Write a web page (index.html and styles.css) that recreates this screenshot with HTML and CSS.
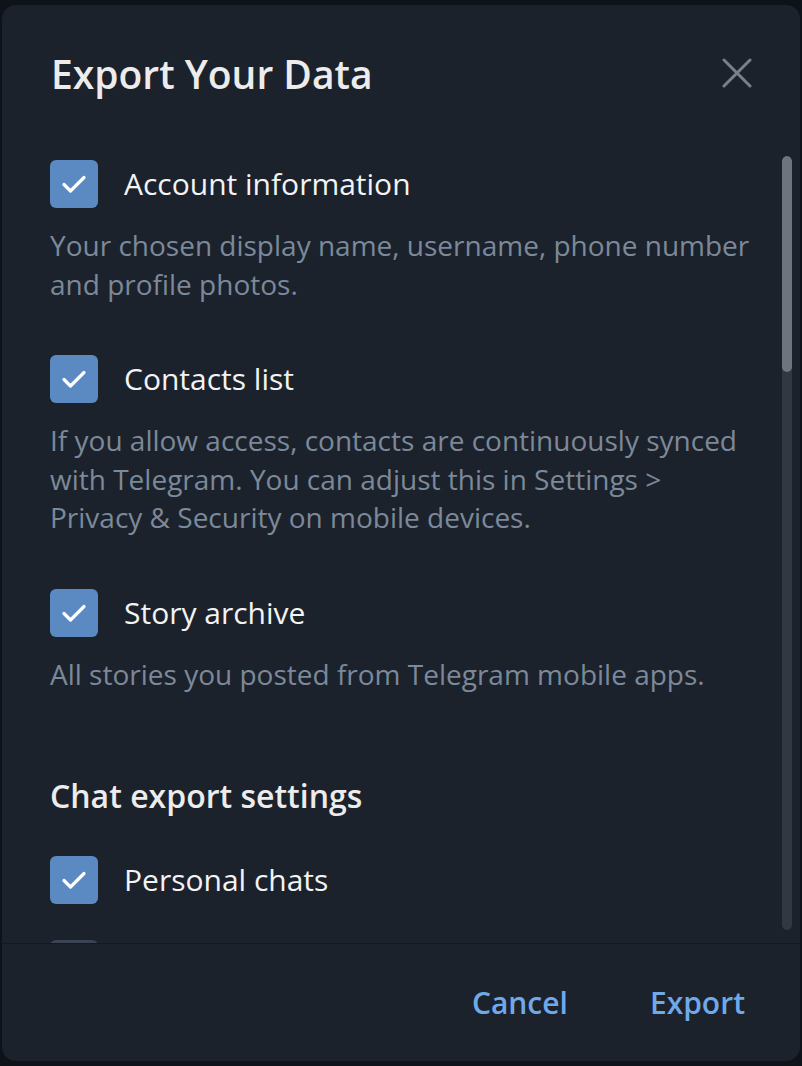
FILE: index.html
```html
<!DOCTYPE html>
<html lang="en">
<head>
<meta charset="utf-8">
<title>Export Your Data</title>
<link rel="stylesheet" href="styles.css">
</head>
<body>
<div class="modal">
  <div class="header">
    <h1 class="title">Export Your Data</h1>
    <button class="close" aria-label="Close">
      <svg width="30" height="30" viewBox="0 0 30 30"><path d="M2 2 L28 28 M28 2 L2 28" stroke="#7a8089" stroke-width="3" stroke-linecap="round" fill="none"/></svg>
    </button>
  </div>
  <div class="body">
    <div class="scroll">
      <div class="item">
        <div class="row"><span class="cb"><svg width="26" height="20" viewBox="0 0 26 20"><path d="M3 10.5 L9.5 17 L23 3.5" stroke="#fff" stroke-width="3.2" fill="none" stroke-linecap="round" stroke-linejoin="round"/></svg></span><span class="label">Account information</span></div>
        <p class="desc">Your chosen display name, username, phone number and profile photos.</p>
      </div>
      <div class="item">
        <div class="row"><span class="cb"><svg width="26" height="20" viewBox="0 0 26 20"><path d="M3 10.5 L9.5 17 L23 3.5" stroke="#fff" stroke-width="3.2" fill="none" stroke-linecap="round" stroke-linejoin="round"/></svg></span><span class="label">Contacts list</span></div>
        <p class="desc">If you allow access, contacts are continuously synced with Telegram. You can adjust this in Settings &gt; Privacy &amp; Security on mobile devices.</p>
      </div>
      <div class="item">
        <div class="row"><span class="cb"><svg width="26" height="20" viewBox="0 0 26 20"><path d="M3 10.5 L9.5 17 L23 3.5" stroke="#fff" stroke-width="3.2" fill="none" stroke-linecap="round" stroke-linejoin="round"/></svg></span><span class="label">Story archive</span></div>
        <p class="desc">All stories you posted from Telegram mobile apps.</p>
      </div>
      <h2 class="section">Chat export settings</h2>
      <div class="item compact">
        <div class="row"><span class="cb"><svg width="26" height="20" viewBox="0 0 26 20"><path d="M3 10.5 L9.5 17 L23 3.5" stroke="#fff" stroke-width="3.2" fill="none" stroke-linecap="round" stroke-linejoin="round"/></svg></span><span class="label">Personal chats</span></div>
      </div>
      <div class="item compact">
        <div class="row"><span class="cb off"></span></div>
      </div>
    </div>
    <div class="scrollbar"><div class="thumb"></div></div>
  </div>
  <div class="footer">
    <button class="btn">Cancel</button>
    <button class="btn">Export</button>
  </div>
</div>
</body>
</html>
```
FILE: styles.css
```css
* { box-sizing: border-box; }
html, body { margin: 0; padding: 0; }
body {
  background: #0e131a;
  width: 802px;
  height: 1066px;
  overflow: hidden;
  font-family: "Open Sans", "Noto Sans", sans-serif;
  padding: 5px 2px 0 2px;
}
.modal {
  width: 798px;
  height: 1056px;
  background: #1c222b;
  border-radius: 14px;
  display: flex;
  flex-direction: column;
  overflow: hidden;
}
.header {
  height: 135px;
  flex: none;
  display: flex;
  align-items: flex-start;
  justify-content: space-between;
  padding: 46px 48px 0 49px;
}
.title {
  margin: 0;
  font-size: 39px;
  font-weight: 600;
  line-height: 46px;
  color: #ececec;
}
.close {
  background: none;
  border: 0;
  padding: 0;
  width: 30px;
  height: 30px;
  margin-top: 7px;
  display: flex;
}
.body {
  flex: 1;
  display: flex;
  min-height: 0;
}
.scroll {
  flex: 1;
  overflow: hidden;
  padding: 20px 0 0 48px;
}
.item { margin-bottom: 52px; }
.item.compact { margin-bottom: 36px; }
.row {
  display: flex;
  align-items: center;
  height: 48px;
}
.cb {
  width: 48px;
  height: 48px;
  border-radius: 6px;
  background: #5b8ac3;
  display: flex;
  align-items: center;
  justify-content: center;
  flex: none;
}
.cb.off { background: #3b4452; }
.label {
  margin-left: 26px;
  font-size: 30px;
  color: #f2f3f5;
  line-height: 40px;
}
.desc {
  margin: 18px 0 0 0;
  font-size: 28px;
  line-height: 38.5px;
  color: #7b899a;
  padding-right: 30px;
}
.section {
  margin: 83px 0 40px 0;
  font-size: 32px;
  font-weight: 600;
  line-height: 40px;
  color: #ececec;
}
.scrollbar {
  flex: none;
  width: 10px;
  margin: 16px 8px 13px 0;
  background: #313842;
  border-radius: 5px;
  overflow: hidden;
}
.thumb {
  height: 216px;
  background: #6d747b;
  border-radius: 5px;
}
.footer {
  flex: none;
  height: 118px;
  border-top: 1px solid #141920;
  display: flex;
  align-items: center;
  justify-content: flex-end;
  padding: 0 55px 0 0;
  gap: 82px;
}
.btn {
  background: none;
  border: 0;
  padding: 0;
  font-family: "Open Sans", "Noto Sans", sans-serif;
  font-size: 30px;
  font-weight: 600;
  color: #6fa9e9;
  line-height: 40px;
}
```
